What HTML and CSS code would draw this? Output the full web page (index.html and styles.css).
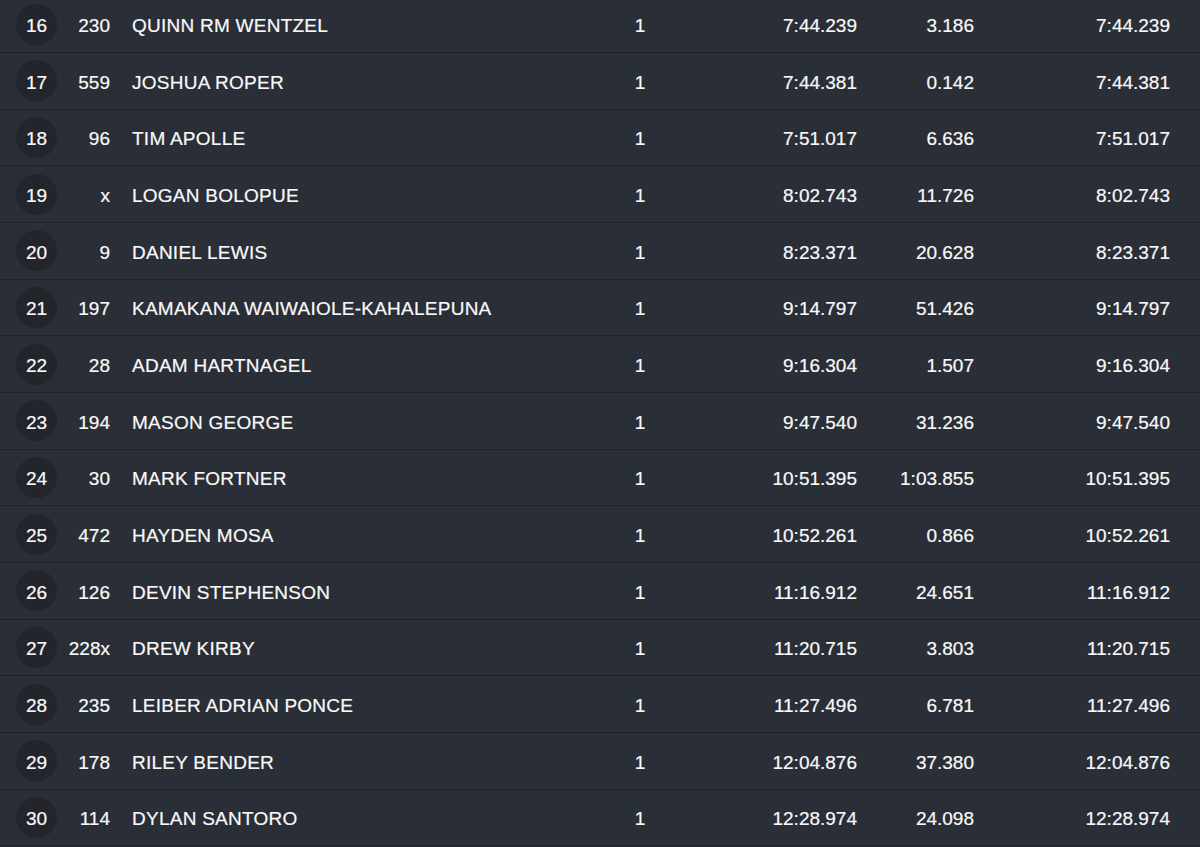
FILE: index.html
```html
<!DOCTYPE html>
<html lang="en">
<head>
<meta charset="utf-8">
<title>Results</title>
<link rel="stylesheet" href="styles.css">
</head>
<body>
<div class="results">
  <div class="row"><div class="pos"><span class="badge">16</span></div><div class="num">230</div><div class="name">QUINN RM WENTZEL</div><div class="laps">1</div><div class="time">7:44.239</div><div class="gap">3.186</div><div class="best">7:44.239</div></div>
  <div class="row"><div class="pos"><span class="badge">17</span></div><div class="num">559</div><div class="name">JOSHUA ROPER</div><div class="laps">1</div><div class="time">7:44.381</div><div class="gap">0.142</div><div class="best">7:44.381</div></div>
  <div class="row"><div class="pos"><span class="badge">18</span></div><div class="num">96</div><div class="name">TIM APOLLE</div><div class="laps">1</div><div class="time">7:51.017</div><div class="gap">6.636</div><div class="best">7:51.017</div></div>
  <div class="row"><div class="pos"><span class="badge">19</span></div><div class="num">x</div><div class="name">LOGAN BOLOPUE</div><div class="laps">1</div><div class="time">8:02.743</div><div class="gap">11.726</div><div class="best">8:02.743</div></div>
  <div class="row"><div class="pos"><span class="badge">20</span></div><div class="num">9</div><div class="name">DANIEL LEWIS</div><div class="laps">1</div><div class="time">8:23.371</div><div class="gap">20.628</div><div class="best">8:23.371</div></div>
  <div class="row"><div class="pos"><span class="badge">21</span></div><div class="num">197</div><div class="name">KAMAKANA WAIWAIOLE-KAHALEPUNA</div><div class="laps">1</div><div class="time">9:14.797</div><div class="gap">51.426</div><div class="best">9:14.797</div></div>
  <div class="row"><div class="pos"><span class="badge">22</span></div><div class="num">28</div><div class="name">ADAM HARTNAGEL</div><div class="laps">1</div><div class="time">9:16.304</div><div class="gap">1.507</div><div class="best">9:16.304</div></div>
  <div class="row"><div class="pos"><span class="badge">23</span></div><div class="num">194</div><div class="name">MASON GEORGE</div><div class="laps">1</div><div class="time">9:47.540</div><div class="gap">31.236</div><div class="best">9:47.540</div></div>
  <div class="row"><div class="pos"><span class="badge">24</span></div><div class="num">30</div><div class="name">MARK FORTNER</div><div class="laps">1</div><div class="time">10:51.395</div><div class="gap">1:03.855</div><div class="best">10:51.395</div></div>
  <div class="row"><div class="pos"><span class="badge">25</span></div><div class="num">472</div><div class="name">HAYDEN MOSA</div><div class="laps">1</div><div class="time">10:52.261</div><div class="gap">0.866</div><div class="best">10:52.261</div></div>
  <div class="row"><div class="pos"><span class="badge">26</span></div><div class="num">126</div><div class="name">DEVIN STEPHENSON</div><div class="laps">1</div><div class="time">11:16.912</div><div class="gap">24.651</div><div class="best">11:16.912</div></div>
  <div class="row"><div class="pos"><span class="badge">27</span></div><div class="num">228x</div><div class="name">DREW KIRBY</div><div class="laps">1</div><div class="time">11:20.715</div><div class="gap">3.803</div><div class="best">11:20.715</div></div>
  <div class="row"><div class="pos"><span class="badge">28</span></div><div class="num">235</div><div class="name">LEIBER ADRIAN PONCE</div><div class="laps">1</div><div class="time">11:27.496</div><div class="gap">6.781</div><div class="best">11:27.496</div></div>
  <div class="row"><div class="pos"><span class="badge">29</span></div><div class="num">178</div><div class="name">RILEY BENDER</div><div class="laps">1</div><div class="time">12:04.876</div><div class="gap">37.380</div><div class="best">12:04.876</div></div>
  <div class="row"><div class="pos"><span class="badge">30</span></div><div class="num">114</div><div class="name">DYLAN SANTORO</div><div class="laps">1</div><div class="time">12:28.974</div><div class="gap">24.098</div><div class="best">12:28.974</div></div>
</div>
</body>
</html>
```

FILE: styles.css
```css
html, body {
  margin: 0;
  padding: 0;
  background: #2a2e37;
  overflow: hidden;
}
body {
  font-family: "Liberation Sans", Arial, sans-serif;
  font-size: 19px;
  color: #f9f9f9;
  -webkit-text-stroke: 0.2px #f9f9f9;
}
.results {
  margin-top: -3.67px;
}
.row {
  box-sizing: border-box;
  height: 56.667px;
  border-bottom: 1px solid #1f2229;
  display: grid;
  grid-template-columns: 41px 53px 490px 80px 177px 117px 196px;
  padding-left: 16px;
  padding-right: 30px;
  align-items: center;
}
.row > div {
  padding-top: 4px;
}
.row > .pos {
  padding-top: 0;
  display: flex;
  align-items: center;
  justify-content: center;
}
.badge {
  width: 41px;
  height: 41px;
  padding-top: 4px;
  box-sizing: border-box;
  border-radius: 50%;
  background: #22252c;
  display: flex;
  align-items: center;
  justify-content: center;
}
.num {
  text-align: right;
}
.name {
  padding-left: 22px;
  white-space: nowrap;
  letter-spacing: 0.25px;
}
.laps {
  text-align: center;
}
.time, .gap, .best {
  text-align: right;
}
```
